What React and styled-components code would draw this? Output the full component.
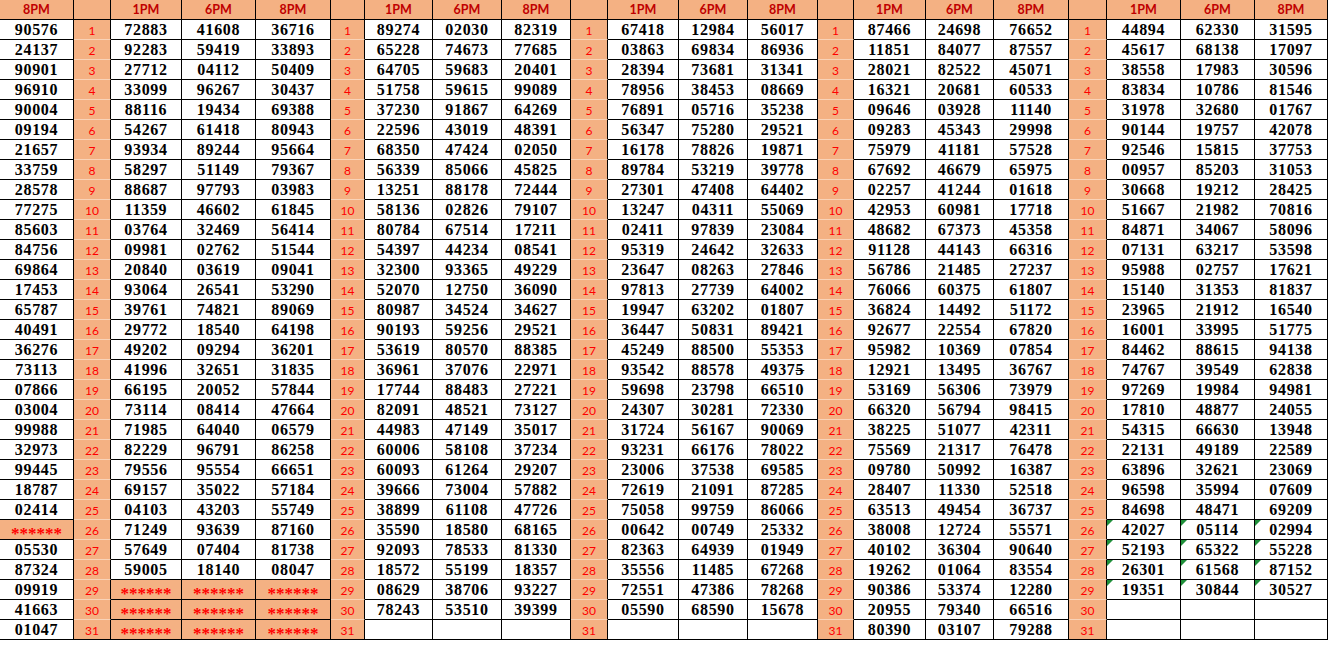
import React from "react";
import styled, { createGlobalStyle } from "styled-components";

const GlobalStyle = createGlobalStyle`
  html, body { margin: 0; padding: 0; background: #ffffff; }
  #root { width: 1328px; }
`;

const PEACH = "#F4B183";

const widths = [74, 37, 71, 74, 75, 34, 68, 69, 69, 37, 71, 69, 70, 36, 72, 68, 75, 38, 74, 74, 73];

const g0 = [
  "90576","24137","90901","96910","90004","09194","21657","33759","28578","77275",
  "85603","84756","69864","17453","65787","40491","36276","73113","07866","03004",
  "99988","32973","99445","18787","02414","*","05530","87324","09919","41663","01047",
];

const parse = (s) => s.split("\n").map((l) => l.trim()).filter(Boolean).map((l) => (l === "-" ? null : l.split(" ")));

const g1 = parse(`
72883 41608 36716
92283 59419 33893
27712 04112 50409
33099 96267 30437
88116 19434 69388
54267 61418 80943
93934 89244 95664
58297 51149 79367
88687 97793 03983
11359 46602 61845
03764 32469 56414
09981 02762 51544
20840 03619 09041
93064 26541 53290
39761 74821 89069
29772 18540 64198
49202 09294 36201
41996 32651 31835
66195 20052 57844
73114 08414 47664
71985 64040 06579
82229 96791 86258
79556 95554 66651
69157 35022 57184
04103 43203 55749
71249 93639 87160
57649 07404 81738
59005 18140 08047
* * *
* * *
* * *
`);

const g2 = parse(`
89274 02030 82319
65228 74673 77685
64705 59683 20401
51758 59615 99089
37230 91867 64269
22596 43019 48391
68350 47424 02050
56339 85066 45825
13251 88178 72444
58136 02826 79107
80784 67514 17211
54397 44234 08541
32300 93365 49229
52070 12750 36090
80987 34524 34627
90193 59256 29521
53619 80570 88385
36961 37076 22971
17744 88483 27221
82091 48521 73127
44983 47149 35017
60006 58108 37234
60093 61264 29207
39666 73004 57882
38899 61108 47726
35590 18580 68165
92093 78533 81330
18572 55199 18357
08629 38706 93227
78243 53510 39399
-
`);

const g3 = parse(`
67418 12984 56017
03863 69834 86936
28394 73681 31341
78956 38453 08669
76891 05716 35238
56347 75280 29521
16178 78826 19871
89784 53219 39778
27301 47408 64402
13247 04311 55069
02411 97839 23084
95319 24642 32633
23647 08263 27846
97813 27739 64002
19947 63202 01807
36447 50831 89421
45249 88500 55353
93542 88578 49375~
59698 23798 66510
24307 30281 72330
31724 56167 90069
93231 66176 78022
23006 37538 69585
72619 21091 87285
75058 99759 86066
00642 00749 25332
82363 64939 01949
35556 11485 67268
72551 47386 78268
05590 68590 15678
-
`);

const g4 = parse(`
87466 24698 76652
11851 84077 87557
28021 82522 45071
16321 20681 60533
09646 03928 11140
09283 45343 29998
75979 41181 57528
67692 46679 65975
02257 41244 01618
42953 60981 17718
48682 67373 45358
91128 44143 66316
56786 21485 27237
76066 60375 61807
36824 14492 51172
92677 22554 67820
95982 10369 07854
12921 13495 36767
53169 56306 73979
66320 56794 98415
38225 51077 42311
75569 21317 76478
09780 50992 16387
28407 11330 52518
63513 49454 36737
38008 12724 55571
40102 36304 90640
19262 01064 83554
90386 53374 12280
20955 79340 66516
80390 03107 79288
`);

const g5 = parse(`
44894 62330 31595
45617 68138 17097
38558 17983 30596
83834 10786 81546
31978 32680 01767
90144 19757 42078
92546 15815 37753
00957 85203 31053
30668 19212 28425
51667 21982 70816
84871 34067 58096
07131 63217 53598
95988 02757 17621
15140 31353 81837
23965 21912 16540
16001 33995 51775
84462 88615 94138
74767 39549 62838
97269 19984 94981
17810 48877 24055
54315 66630 13948
22131 49189 22589
63896 32621 23069
96598 35994 07609
84698 48471 69209
42027^ 05114^ 02994^
52193^ 65322^ 55228^
26301^ 61568^ 87152^
19351^ 30844^ 30527^
-
-
`);

const groups = [g1, g2, g3, g4, g5];

const Sheet = styled.table`
  width: 1328px;
  table-layout: fixed;
  border-collapse: separate;
  border-spacing: 0;
`;

const Head = styled.th`
  height: 20px;
  box-sizing: border-box;
  padding: 0 0 1px 0;
  background: ${PEACH};
  border-right: 1px solid #000;
  border-bottom: 1px solid #000;
  color: #c00000;
  font: 700 12.5px "Lato", "Liberation Sans", sans-serif;
  text-align: center;
  vertical-align: middle;
`;

const DayCell = styled.td`
  height: 20px;
  box-sizing: border-box;
  padding: 0 0 1px 0;
  background: ${PEACH};
  border-right: 1px solid #000;
  border-bottom: 1px solid ${(p) => (p.$last ? "#000" : "#f9d3b8")};
  color: #ff0000;
  font: 400 12px "Lato", "Liberation Sans", sans-serif;
  text-align: center;
  vertical-align: bottom;
`;

const NumCell = styled.td`
  position: relative;
  height: 20px;
  box-sizing: border-box;
  padding: 0;
  background: #fff;
  border-right: 1px solid #000;
  border-bottom: 1px solid #000;
  color: #000;
  font: 700 16px "Liberation Serif", "Times New Roman", serif;
  letter-spacing: 0.7px;
  text-align: center;
  vertical-align: bottom;
  white-space: nowrap;

  ${(p) =>
    p.$flag &&
    `&::before {
      content: "";
      position: absolute;
      left: 0;
      top: 0;
      width: 0;
      height: 0;
      border-top: 6px solid #1f8f3a;
      border-right: 6px solid transparent;
    }`}
`;

const MaskedCell = styled.td`
  height: 20px;
  box-sizing: border-box;
  padding: 9px 0 0 0;
  background: ${PEACH};
  border-right: 1px solid #000;
  border-bottom: 1px solid #000;
  color: #ff0000;
  font: 700 17px/10px "Liberation Serif", "Times New Roman", serif;
  text-align: center;
  vertical-align: top;
  white-space: nowrap;
`;

const Struck = styled.span`
  text-decoration: line-through;
  text-decoration-thickness: 1px;
`;

function Value({ v }) {
  let s = v.replace("^", "");
  if (s.endsWith("~")) {
    s = s.slice(0, -1);
    return (
      <>
        {s.slice(0, -1)}
        <Struck>{s.slice(-1)}</Struck>
      </>
    );
  }
  return s;
}

function Num({ v }) {
  if (v === "*") return <MaskedCell>******</MaskedCell>;
  const flag = typeof v === "string" && v.includes("^");
  return <NumCell $flag={flag}>{v != null && <Value v={v} />}</NumCell>;
}

export default function App() {
  const rows = Array.from({ length: 31 }, (_, i) => i);
  return (
    <>
      <GlobalStyle />
      <Sheet>
        <colgroup>
          {widths.map((w, i) => (
            <col key={i} style={{ width: w }} />
          ))}
        </colgroup>
        <thead>
          <tr>
            <Head>8PM</Head>
            {groups.map((_, gi) => (
              <React.Fragment key={gi}>
                <Head />
                <Head>1PM</Head>
                <Head>6PM</Head>
                <Head>8PM</Head>
              </React.Fragment>
            ))}
          </tr>
        </thead>
        <tbody>
          {rows.map((r) => (
            <tr key={r}>
              <Num v={g0[r]} />
              {groups.map((g, gi) => {
                const row = g[r];
                return (
                  <React.Fragment key={gi}>
                    <DayCell $last={r === 30}>{r + 1}</DayCell>
                    <Num v={row ? row[0] : null} />
                    <Num v={row ? row[1] : null} />
                    <Num v={row ? row[2] : null} />
                  </React.Fragment>
                );
              })}
            </tr>
          ))}
        </tbody>
      </Sheet>
    </>
  );
}
